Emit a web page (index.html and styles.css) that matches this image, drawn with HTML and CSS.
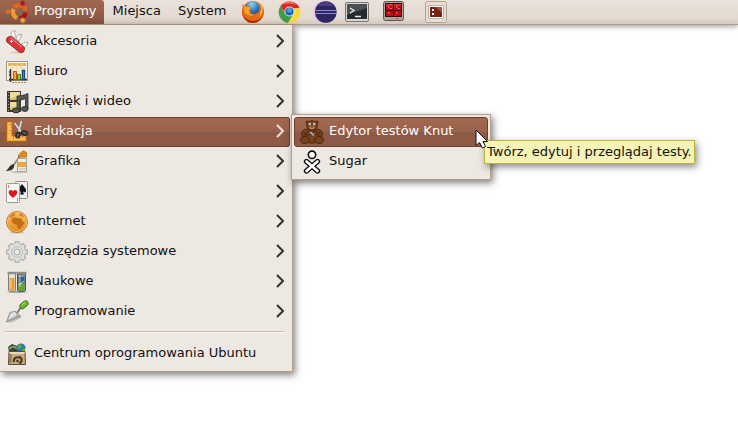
FILE: index.html
```html
<!DOCTYPE html>
<html lang="pl">
<head>
<meta charset="utf-8">
<title>Programy</title>
<link rel="stylesheet" href="styles.css">
</head>
<body>
<header class="panel">
  <nav class="menubar">
    <button class="menubar-item active" type="button">
      <svg class="icon" viewBox="0 0 24 24" aria-hidden="true">
        <g fill="none" stroke-width="4.4">
          <path d="M9 7.500A6.600 6.600 0 0 1 18 6.500" stroke="#e8641c"/>
          <path d="M20.500 12.500A6.600 6.600 0 0 1 14.500 18.500" stroke="#b01018"/>
          <path d="M12 18A6.600 6.600 0 0 1 8.500 9" stroke="#f0983a"/>
          <path d="M19 6.500A7 7 0 0 1 20.500 10.500" stroke="#e8641c"/>
        </g>
        <circle cx="3.200" cy="11.500" r="2.600" fill="#f07018" stroke="#97614c"/>
        <circle cx="17.700" cy="3.200" r="2.700" fill="#b51420" stroke="#97614c"/>
        <circle cx="17.700" cy="20.500" r="2.700" fill="#efa83e" stroke="#97614c"/>
      </svg>
      <span class="label">Programy</span>
    </button>
    <button class="menubar-item" type="button"><span class="label">Miejsca</span></button>
    <button class="menubar-item" type="button"><span class="label">System</span></button>
  </nav>
  <div class="launchers">
    <button class="launcher" type="button" aria-label="Firefox">
      <svg class="icon" viewBox="0 0 24 24" aria-hidden="true">
        <defs>
          <radialGradient id="ff" cx=".6" cy=".35" r=".7"><stop offset="0" stop-color="#ffc234"/><stop offset=".5" stop-color="#ee7a10"/><stop offset="1" stop-color="#a82a08"/></radialGradient>
          <radialGradient id="sea" cx=".45" cy=".2" r=".8"><stop offset="0" stop-color="#8fd4f5"/><stop offset=".6" stop-color="#2e78bd"/><stop offset="1" stop-color="#153d83"/></radialGradient>
        </defs>
        <circle cx="12" cy="12" r="11" fill="url(#ff)"/>
        <circle cx="11.500" cy="8.500" r="7.300" fill="url(#sea)"/>
        <path d="M1.500 4 4 6.500l4-.5 2.500 2-2 2.500 1.500 3 4.500.5 4-3 .5-7 3.500 6-1 7.500-6 5.500H8L1.500 16Z" fill="#e66c10"/>
        <path d="m2 4 3 3 3-.5 2 1.500-2 2 1 3.500 4 1.500-4 1-5-3Z" fill="#f5a127"/>
        <path d="M19.500 4c3 4 2.500 9-1 12.500l2-8Z" fill="#ffd855"/>
        <path d="M2 15c4 7 13 8 19 2-4 8-16 8-19-2Z" fill="#a52a08"/>
      </svg>
    </button>
    <button class="launcher" type="button" aria-label="Chrome">
      <svg class="icon" viewBox="0 0 24 24" aria-hidden="true">
        <path d="M3.500 6A11 11 0 0 1 22.700 8.500H12.500L8 13Z" fill="#d82820"/>
        <path d="M3.500 6A11 11 0 0 0 11 23l5-8.500-8-1Z" fill="#3f9c48"/>
        <path d="M22.700 8A11 11 0 0 1 11 23l5.500-8-1-6.500Z" fill="#f8d93a"/>
        <path d="M5 4.500c4-4 11-4 14 .5-5-2-10-2-14-.5Z" fill="#f27768"/>
        <circle cx="12.500" cy="11.500" r="5" fill="#e4ecf2"/>
        <circle cx="12.500" cy="11.500" r="4.100" fill="#1762ad"/>
        <circle cx="12.500" cy="10.300" r="2.500" fill="#4f9ad8"/>
      </svg>
    </button>
    <button class="launcher" type="button" aria-label="Eclipse">
      <svg class="icon" viewBox="0 0 24 24" aria-hidden="true">
        <circle cx="11" cy="12" r="11" fill="#efbfe3"/>
        <circle cx="12.800" cy="12" r="10.800" fill="#2c2464"/>
        <path d="M4.500 6a10 10 0 0 1 16.500 0Z" fill="#493d83"/>
        <path d="M2.500 10.500H23.500M2 13.500H24" stroke="#8b91c6"/>
      </svg>
    </button>
    <div class="launcher-group">
      <button class="launcher" type="button" aria-label="Terminal">
        <svg class="icon" viewBox="0 0 24 24" aria-hidden="true">
          <rect x=".5" y="2.500" width="23" height="19" rx="1.500" fill="#d5d7d2" stroke="#777975"/>
          <rect x="2" y="4" width="20" height="15" fill="#252a2c"/>
          <path d="M2 4h20v4L2 15Z" fill="#4b5153"/>
          <path d="m5 8 4 2.500L5 13M10 16.500h6" fill="none" stroke="#e6eae6" stroke-width="1.300"/>
        </svg>
      </button>
      <button class="launcher" type="button" aria-label="Terminator">
        <svg class="icon" viewBox="0 0 24 24" aria-hidden="true">
          <rect x="2.500" y="1.500" width="20" height="19" rx="2" fill="#aaa6a1" stroke="#5c5855"/>
          <rect x="4" y="3" width="17" height="14" fill="#3a0508"/>
          <path d="M5 4h7v6H5ZM13 4h7v6h-7ZM5 11h7v5H5ZM13 11h7v5h-7Z" fill="#b90e19"/>
          <path d="M5 4h7v2H5ZM13 4h7v2h-7Z" fill="#dc2c35"/>
          <path d="m7 6.500 1.500 1M9 8.500h1.500M15 6.500l1.500 1M17 8.500h1.500M7 12.500l1.500 1M15 12.500l1.500 1" fill="none" stroke="#ff9d95" stroke-width=".9"/>
          <path d="M15 18.500h2" stroke="#f04018"/>
        </svg>
      </button>
    </div>
    <button class="launcher" type="button" aria-label="Obszar roboczy">
      <svg class="icon" viewBox="0 0 24 24" aria-hidden="true">
        <rect x=".5" y="1.500" width="21" height="21" rx="2" fill="#e7dfd7" stroke="#b9a18d"/>
        <rect x="3.500" y="5.500" width="15" height="13" fill="#fff" stroke="#bbb1a7"/>
        <rect x="5" y="7" width="12" height="10" fill="#76200f"/>
        <path d="M10 7h7v6Z" fill="#a84b35"/>
        <path d="M7 9h2v2H7ZM7 13h2v2H7Z" fill="#fff"/>
      </svg>
    </button>
  </div>
</header>

<main class="desktop">
  <ul class="menu">
    <li><button class="menu-item" type="button">
      <svg class="icon" viewBox="0 0 24 24" aria-hidden="true">
        <ellipse cx="12" cy="22.500" rx="7" ry="1" fill="#cfcac3"/>
        <g fill="#f3f3f1" stroke="#a5a6a3" stroke-width=".9">
          <path d="M8 7C4 4 6 1 10.500.8c-2 3 0 4 1 8Z"/>
          <path d="M11 9c1-4 3-4.500 6-4.500-1 3-2 4-3 7Z"/>
          <path d="M16 16c1-3 3-4 7-4-1 4-3 6-5 7Z"/>
        </g>
        <path d="m5 10 11 9" stroke="#9f181d" stroke-width="7.600" stroke-linecap="round"/>
        <path d="m5 10 11 9" stroke="#d8343a" stroke-width="6.200" stroke-linecap="round"/>
        <path d="m6 8 10.500 8.500" stroke="#ee7a76" stroke-linecap="round" stroke-width="1.300"/>
        <path d="M6.500 10v3M5 11.500h3" stroke="#fff"/>
      </svg>
      <span class="label">Akcesoria</span>
      <svg class="arrow" viewBox="0 0 8 14" aria-hidden="true"><path d="m1 1 6 6-6 6"/></svg>
    </button></li>
    <li><button class="menu-item" type="button">
      <svg class="icon" viewBox="0 0 24 24" aria-hidden="true">
        <rect x="1.500" y="1.500" width="21" height="19" fill="#f5f2e9" stroke="#979993"/>
        <path d="M3 4.500h18" stroke="#eab64a" stroke-width="3"/>
        <path d="M3 8h18M3 11h18M3 14h18M7 3v15M12 3v15M17 3v15" stroke="#e6d5ae"/>
        <path d="M5.500 9v13M4 19.500h18M4 12h2M4 15h2" stroke="#333" stroke-width="1.400"/>
        <path d="M8.500 11.500h3v8h-3Z" fill="#f6a344" stroke="#b9570f"/>
        <path d="M12.500 14.500h3v5h-3Z" fill="#8fd03a" stroke="#438509"/>
        <path d="M17.500 10.500h2v9h-2Z" fill="#6ba0dc" stroke="#1c4987" stroke-width="1.400"/>
        <path d="M7 22.500h15" stroke="#c77d3d" stroke-dasharray="2 1"/>
      </svg>
      <span class="label">Biuro</span>
      <svg class="arrow" viewBox="0 0 8 14" aria-hidden="true"><path d="m1 1 6 6-6 6"/></svg>
    </button></li>
    <li><button class="menu-item" type="button">
      <svg class="icon" viewBox="0 0 24 24" aria-hidden="true">
        <rect x="2" y="1" width="14" height="21" fill="#383934"/>
        <path d="M5 2h10v8H5ZM5 12h10v8H5Z" fill="#d8ba6c"/>
        <path d="M5 2h10v3L5 9ZM5 12h10v3L5 18Z" fill="#f0dc9a"/>
        <path d="M3.500 2v19" stroke="#a5a49a" stroke-dasharray="1 2"/>
        <path d="M16 10h4v8h-4Z" fill="#ede8e2"/>
        <path d="M12 6c4 0 7.500-1 11-2.500V19h-2.500V8.500c-2 1-4 1.500-6 1.500v11H12Z" fill="#555853" stroke="#2b2d2a" stroke-width=".8"/>
        <ellipse cx="11" cy="20.500" rx="3.600" ry="2.400" fill="#555752" stroke="#2b2d2a"/>
        <ellipse cx="19.800" cy="19" rx="3.300" ry="2.400" fill="#555752" stroke="#2b2d2a"/>
      </svg>
      <span class="label">Dźwięk i wideo</span>
      <svg class="arrow" viewBox="0 0 8 14" aria-hidden="true"><path d="m1 1 6 6-6 6"/></svg>
    </button></li>
    <li class="has-submenu">
      <button class="menu-item selected" type="button">
        <svg class="icon" viewBox="0 0 24 24" aria-hidden="true">
          <path d="M1.500 1.500h6v14h14v6h-20Z" fill="#f0a23b" stroke="#b8620d"/>
          <path d="M3 3h3v14h14v3H3Z" fill="#f8bf60"/>
          <path d="M4.500 4.500h3M5.500 7.500h2M4.500 10.500h3M5.500 13.500h2M8.500 16v3M11.500 16v2M14.500 16v3M17.500 16v2" stroke="#c77d2a"/>
          <path d="m9.500 3 7 9M16.500 1l-3 11" stroke="#6b6d6a" stroke-width="2.800"/>
          <path d="m9.500 3 7 9M16.500 1l-3 11" stroke="#d9dcd9" stroke-width="1.600"/>
          <ellipse cx="13" cy="15" rx="1.800" ry="2.500" fill="none" stroke="#303331" stroke-width="2" transform="rotate(25 13 15)"/>
          <ellipse cx="19.500" cy="13" rx="3" ry="1.800" fill="none" stroke="#303331" stroke-width="2" transform="rotate(20 19.500 13)"/>
        </svg>
        <span class="label">Edukacja</span>
        <svg class="arrow" viewBox="0 0 8 14" aria-hidden="true"><path d="m1 1 6 6-6 6"/></svg>
      </button>
      <ul class="menu submenu">
        <li class="has-tooltip">
          <button class="menu-item selected" type="button" aria-describedby="tip">
            <svg class="icon" viewBox="0 0 24 24" aria-hidden="true">
              <g fill="#78401b" stroke="#45220e" stroke-width=".8">
                <circle cx="7.500" cy="2.500" r="1.500"/><circle cx="16.500" cy="2.500" r="1.500"/>
                <path d="M7 9C1 10 0 14 3 18h18c3-4 2-8-4-9Z"/>
                <ellipse cx="12" cy="5.500" rx="5.300" ry="4.800"/>
                <ellipse cx="12" cy="17" rx="7.500" ry="6.200"/>
                <ellipse cx="4.800" cy="20" rx="4.300" ry="3.500"/><ellipse cx="19.200" cy="20" rx="4.300" ry="3.500"/>
                <path d="M3.500 11.500c1 3 4 4 7.500 3M20.500 11.500c-1 3-4 4-7.500 3" fill="none"/>
              </g>
              <circle cx="9.800" cy="4" r="1.300" fill="#fff"/><circle cx="14.200" cy="4" r="1.300" fill="#fff"/>
              <path d="M9.500 4h1M13.500 4h1" stroke="#111"/>
              <ellipse cx="12" cy="7.500" rx="2.600" ry="1.700" fill="#c69162"/>
              <path d="M11 6.500h2v1h-2Z" fill="#111"/>
              <path d="m10 12 4 3.500" stroke="#9fa8ae" stroke-width="1.800"/>
            </svg>
            <span class="label">Edytor testów Knut</span>
          </button>
          <svg class="cursor" viewBox="0 0 14 20" aria-hidden="true"><path d="M1 1v15.500l3.500-3 3 5.500 3-1.500-2.500-5h4.500Z"/></svg>
          <div class="tooltip" id="tip" role="tooltip">Twórz, edytuj i przeglądaj testy.</div>
        </li>
        <li><button class="menu-item" type="button">
          <svg class="icon" viewBox="0 0 24 24" aria-hidden="true">
            <path d="m6.500 11.500 11 9.500M17.500 11.500l-11 9.500" stroke="#111" stroke-width="5.400" stroke-linecap="round"/>
            <circle cx="12" cy="4.800" r="3.700" fill="#fff" stroke="#111" stroke-width="1.600"/>
            <path d="m6.500 11.500 11 9.500M17.500 11.500l-11 9.500" stroke="#fff" stroke-width="2.600" stroke-linecap="round"/>
          </svg>
          <span class="label">Sugar</span>
        </button></li>
      </ul>
    </li>
    <li><button class="menu-item" type="button">
      <svg class="icon" viewBox="0 0 24 24" aria-hidden="true">
        <ellipse cx="14" cy="22" rx="9" ry="1.200" fill="#cbc6bf"/>
        <path d="m17 3-9 13" stroke="#8a8c88" stroke-width="1.800"/>
        <path d="m9 14-3 1c-2 2-3 4-5 6 4 0 7-1 8-4Z" fill="#333532"/>
        <path d="M13.500 5 18 1l3.500 1.500V7h-8Z" fill="#e78d1c" stroke="#b65e09" stroke-width=".8"/>
        <path d="M13 8.500h8.500v13h-9V11Z" fill="#eeeeeb" stroke="#9b9d98" stroke-width=".9"/>
        <path d="M13 12h8v5h-8Z" fill="#f2a538"/>
        <path d="M14 19h7" stroke="#b6b8b4"/>
      </svg>
      <span class="label">Grafika</span>
      <svg class="arrow" viewBox="0 0 8 14" aria-hidden="true"><path d="m1 1 6 6-6 6"/></svg>
    </button></li>
    <li><button class="menu-item" type="button">
      <svg class="icon" viewBox="0 0 24 24" aria-hidden="true">
        <rect x="10.500" y="1.500" width="12" height="17" rx="1" fill="#eff0ee" stroke="#8b8d89"/>
        <path d="M17 4c2 3 4 4 4 6.500s-2 2-3 1l1 3h-4l1-3c-2 1-4 0-3-2Z" fill="#111"/>
        <rect x="1.500" y="3.500" width="13" height="19" rx="1" fill="#f7f7f5" stroke="#9b9d99"/>
        <path d="M8 18C3 14 3 12 4.500 10.500c1.200-1 3-.5 3.500 1 .5-1.500 2.300-2 3.500-1C13 12 13 14 8 18Z" fill="#dc151b"/>
        <path d="M3.500 5v3M12.500 18v3" stroke="#d87474"/>
      </svg>
      <span class="label">Gry</span>
      <svg class="arrow" viewBox="0 0 8 14" aria-hidden="true"><path d="m1 1 6 6-6 6"/></svg>
    </button></li>
    <li><button class="menu-item" type="button">
      <svg class="icon" viewBox="0 0 24 24" aria-hidden="true">
        <defs><linearGradient id="globe" x2="0" y2="1"><stop stop-color="#f8bc63"/><stop offset="1" stop-color="#e18a20"/></linearGradient></defs>
        <ellipse cx="12" cy="22.300" rx="8" ry="1.200" fill="#c9c4bd"/>
        <circle cx="12" cy="12" r="10.500" fill="url(#globe)" stroke="#c8741c"/>
        <path d="M7 8.500 10 7l2 1 4 .5 2 3.500h2l-3 4-2 3h-2l-1-4-3-1-2.500-2.500Z" fill="#c56d15"/>
        <path d="m4 7 3-4 4-.5-2 3.500-4 2ZM14 3l4 1 2 3-5-1Z" fill="#cf7a20"/>
        <circle cx="12" cy="12" r="9.500" fill="none" stroke="#fbd58f" stroke-opacity=".6"/>
      </svg>
      <span class="label">Internet</span>
      <svg class="arrow" viewBox="0 0 8 14" aria-hidden="true"><path d="m1 1 6 6-6 6"/></svg>
    </button></li>
    <li><button class="menu-item" type="button">
      <svg class="icon" viewBox="0 0 24 24" aria-hidden="true">
        <g stroke="#a3a5a2" stroke-width="5">
          <path d="M12 1.200v21.600M1.200 12h21.600M4.400 4.400l15.200 15.200M19.600 4.400 4.400 19.600"/>
        </g>
        <circle cx="12" cy="12" r="9" fill="#a3a5a2"/>
        <g stroke="#e0e1df" stroke-width="3.200">
          <path d="M12 2.200v19.600M2.200 12h19.600M5.100 5.100l13.800 13.800M18.900 5.100 5.100 18.900"/>
        </g>
        <circle cx="12" cy="12" r="8.200" fill="#e0e1df"/>
        <circle cx="12" cy="12" r="5.500" fill="none" stroke="#b9bbb8"/>
        <circle cx="12" cy="12" r="3" fill="#ede8e2" stroke="#a3a5a2"/>
      </svg>
      <span class="label">Narzędzia systemowe</span>
      <svg class="arrow" viewBox="0 0 8 14" aria-hidden="true"><path d="m1 1 6 6-6 6"/></svg>
    </button></li>
    <li><button class="menu-item" type="button">
      <svg class="icon" viewBox="0 0 24 24" aria-hidden="true">
        <ellipse cx="12" cy="22" rx="10" ry="1.200" fill="#aaa8a3"/>
        <path d="M3.500 3v17c0 2 7 2 7 0V3Z" fill="#e1e3df" stroke="#7d807b"/>
        <path d="M4.500 8h5v12c0 1-5 1-5 0Z" fill="#eb9c2c"/>
        <path d="M2.500 3h9" stroke="#8d908b" stroke-width="2.400"/>
        <path d="M12.500 4h8v16c0 2-8 2-8 0Z" fill="#87929c" stroke="#45525f"/>
        <path d="M13.500 7h6v6h-6Z" fill="#2e5f92"/>
        <path d="M13.500 13h6v7c0 1-6 1-6 0Z" fill="#66a62b"/>
        <path d="m14 15 5-4M6 9v10M15 5v12" stroke="#e5efda" stroke-opacity=".8"/>
        <path d="M11.500 3h10" stroke="#8d908b" stroke-width="2.400"/>
      </svg>
      <span class="label">Naukowe</span>
      <svg class="arrow" viewBox="0 0 8 14" aria-hidden="true"><path d="m1 1 6 6-6 6"/></svg>
    </button></li>
    <li><button class="menu-item" type="button">
      <svg class="icon" viewBox="0 0 24 24" aria-hidden="true">
        <path d="m2 22.500 6 0 8-5-2-1Z" fill="#c9c5bf"/>
        <path d="m12 13 4-6" stroke="#70736f" stroke-width="1.800"/>
        <path d="M1.500 22 5 12.500l5-1.500 6 5.500Z" fill="#a8aba8" stroke="#888b87" stroke-width=".8"/>
        <path d="m3 20 3-7 4-1 2 3Z" fill="#e2e3e1"/>
        <path d="m17.500 6 3-2.500" stroke="#427912" stroke-width="6" stroke-linecap="round"/>
        <path d="m17.500 6 3-2.500" stroke="#72b52b" stroke-width="4.200" stroke-linecap="round"/>
        <path d="m16.500 5 4-3" stroke="#b9e37a"/>
      </svg>
      <span class="label">Programowanie</span>
      <svg class="arrow" viewBox="0 0 8 14" aria-hidden="true"><path d="m1 1 6 6-6 6"/></svg>
    </button></li>
    <li class="separator" role="separator"></li>
    <li><button class="menu-item" type="button">
      <svg class="icon" viewBox="0 0 24 24" aria-hidden="true">
        <path d="M4 10 3 5l4-3 5 2 4-2 4 3v6Z" fill="#3c423c"/>
        <path d="M4 7c3-3 6-3 8 0" fill="none" stroke="#80a164" stroke-width="2"/>
        <circle cx="16" cy="6" r="4.500" fill="#2473bd"/>
        <path d="m13 3 3-1 1 3-2 2-3-1ZM17 7l3-1v4h-3Z" fill="#5cab3e"/>
        <path d="M4 9.500h16l.5 13h-17Z" fill="#c9ab7a" stroke="#5e4b31"/>
        <path d="M4 10h16l-1 2H5Z" fill="#ead9b8"/>
        <path d="M9 20c-1-4 3-6 7-4M14 15c4 1 3 6 0 6" fill="none" stroke="#493a27" stroke-width="2"/>
        <circle cx="12.500" cy="19" r="1.300" fill="#493a27"/>
        <path d="M5.500 12v9" stroke="#8d7654" stroke-width="2"/>
      </svg>
      <span class="label">Centrum oprogramowania Ubuntu</span>
    </button></li>
  </ul>
</main>
</body>
</html>
```
FILE: styles.css
```css
* {
  box-sizing: border-box;
}

body {
  margin: 0;
  min-height: 100vh;
  background: #fff;
  color: #111;
  font: 13px/18px "DejaVu Sans", sans-serif;
}

button {
  margin: 0;
  padding: 0;
  border: 0;
  background: none;
  color: inherit;
  font: inherit;
  text-align: left;
}

ul {
  margin: 0;
  padding: 0;
  list-style: none;
}

.icon {
  display: block;
  flex: none;
  width: 24px;
  height: 24px;
}

.panel {
  display: flex;
  height: 25px;
  border-bottom: 1px solid #b59a83;
  background: linear-gradient(#e9e1da, #e4dbd2 70%, #d5cac0);
  box-shadow: 0 1px 6px rgb(0 0 0 / 45%);
}

.menubar {
  display: flex;
  gap: 1px;
}

.menubar-item {
  display: flex;
  align-items: center;
  gap: 5px;
  padding: 0 8px;
}

.menubar-item.active {
  padding: 0 7px 0 5px;
  border-radius: 0 3px 0 0;
  background: linear-gradient(#a1664e, #94604b 50%, #83523f);
  color: #fff;
}

.launchers,
.launcher-group {
  display: flex;
  gap: 12px;
}

.launchers {
  margin-left: 7px;
}

.launcher-group {
  margin: 0 8px 0 -4px;
}

.desktop {
  display: flex;
}

.menu {
  padding: 2px 2px 2px 0;
  border: 1px solid #b59f8b;
  border-width: 0 1px 1px 0;
  background: #ede8e2;
  box-shadow: 2px 3px 7px rgb(0 0 0 / 50%);
}

.desktop > .menu {
  position: relative;
  min-width: 293px;
}

.menu-item {
  display: flex;
  align-items: center;
  gap: 5px;
  width: 100%;
  height: 30px;
  padding: 0 5px;
  border: 1px solid transparent;
  border-left: 0;
}

.menu-item.selected {
  border-color: #6d3f2e;
  border-radius: 0 3px 3px 0;
  background: linear-gradient(#a3684f, #9a624b 50%, #8c5a46 51%, #8e5b47);
  color: #fff;
}

.label {
  flex: 1;
  margin-bottom: 2px;
  white-space: nowrap;
}

.arrow {
  width: 8px;
  height: 14px;
  margin-bottom: 2px;
  fill: none;
  stroke: #333;
  stroke-width: 2;
}

.selected .arrow {
  stroke: #f0dfd7;
}

.separator {
  height: 2px;
  margin: 4px 6px 6px 5px;
  border-top: 1px solid #cbb9a9;
  border-bottom: 1px solid #faf8f5;
}

.has-submenu,
.has-tooltip {
  position: relative;
}

.submenu {
  position: absolute;
  top: -3px;
  left: 100%;
  z-index: 1;
  width: 200px;
  margin-left: 1px;
  padding: 2px;
  border-width: 1px;
}

.submenu .menu-item {
  border-left: 1px solid transparent;
}

.submenu .selected {
  border-color: #6d3f2e;
  border-radius: 3px;
}

.cursor {
  position: absolute;
  top: 12px;
  left: 181px;
  z-index: 2;
  width: 14px;
  height: 20px;
  fill: #fff;
  stroke: #111;
  stroke-width: 1;
}

.tooltip {
  position: absolute;
  top: 23px;
  left: 190px;
  padding: 2px;
  border: 1px solid #b9b53c;
  background: #f5f3b5;
  color: #111;
  white-space: nowrap;
  box-shadow: 2px 3px 7px rgb(0 0 0 / 45%);
}
```
